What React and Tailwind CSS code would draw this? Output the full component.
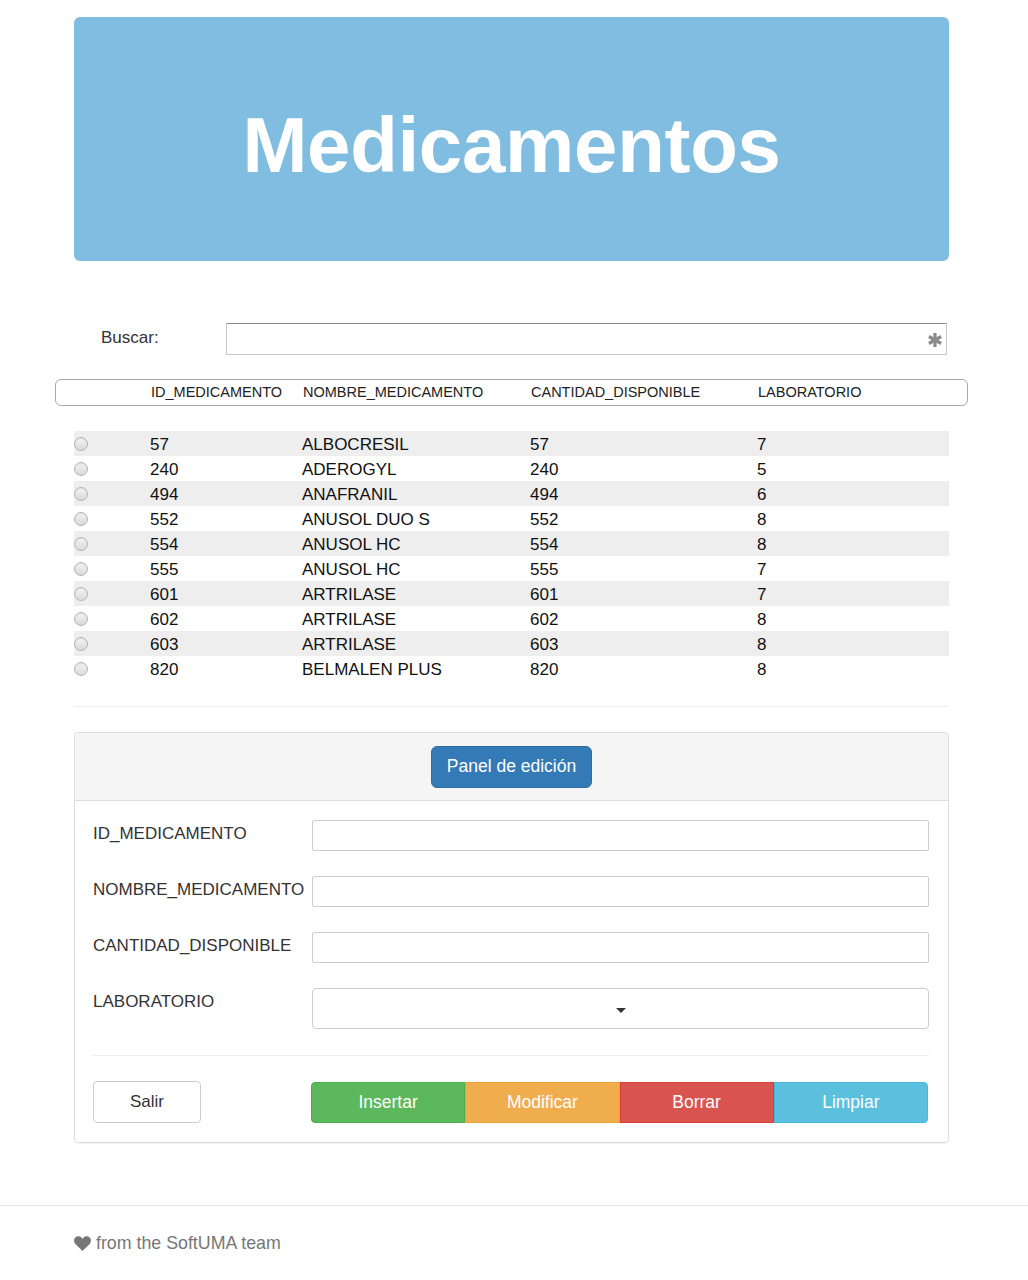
import { useState } from 'react';

const rows = [
  ['57', 'ALBOCRESIL', '57', '7'],
  ['240', 'ADEROGYL', '240', '5'],
  ['494', 'ANAFRANIL', '494', '6'],
  ['552', 'ANUSOL DUO S', '552', '8'],
  ['554', 'ANUSOL HC', '554', '8'],
  ['555', 'ANUSOL HC', '555', '7'],
  ['601', 'ARTRILASE', '601', '7'],
  ['602', 'ARTRILASE', '602', '8'],
  ['603', 'ARTRILASE', '603', '8'],
  ['820', 'BELMALEN PLUS', '820', '8'],
];

const fields = ['ID_MEDICAMENTO', 'NOMBRE_MEDICAMENTO', 'CANTIDAD_DISPONIBLE'];

function Radio() {
  return (
    <span className="block w-[14px] h-[14px] rounded-full border border-[#b5b5b5] bg-gradient-to-b from-[#f4f4f4] to-[#d9d9d9] shadow-[inset_0_1px_1px_rgba(0,0,0,0.08)]" />
  );
}

export default function App() {
  const [selected, setSelected] = useState(null);

  return (
    <div className="min-h-screen bg-white text-[#333] font-['Liberation_Sans',Arial,sans-serif] text-[17px]">
      <div className="w-[875px] ml-[74px] pt-[17px]">
        {/* jumbotron */}
        <div className="h-[244px] bg-[#80bde0] rounded-[6px] flex items-center justify-center">
          <h1 className="text-white font-bold text-[78px] leading-none tracking-[-0.3px] pt-[12px]">Medicamentos</h1>
        </div>

        {/* search */}
        <div className="mt-[62px] flex items-center">
          <label className="w-[152px] pl-[27px] -mt-[3px]">Buscar:</label>
          <div className="relative w-[721px] h-[32px] border border-[#c8c8c8] border-t-[#8e8e8e] flex items-center justify-end pr-[4px]">
            <svg width="14" height="14" viewBox="0 0 14 14" className="mt-[2px]">
              <g stroke="#8a8a8a" strokeWidth="3.2">
                <line x1="7" y1="0" x2="7" y2="14" />
                <line x1="0.9" y1="3.5" x2="13.1" y2="10.5" />
                <line x1="0.9" y1="10.5" x2="13.1" y2="3.5" />
              </g>
            </svg>
          </div>
        </div>

        {/* table header */}
        <div className="mt-[24px] -mx-[19px] h-[27px] border border-[#a8a8a8] rounded-[6px] pl-[19px] grid grid-cols-[76px_152px_228px_227px_1fr] items-center text-[14.5px] text-[#222]">
          <span />
          <span className="pt-[1px]">ID_MEDICAMENTO</span>
          <span className="pt-[1px]">NOMBRE_MEDICAMENTO</span>
          <span className="pt-[1px]">CANTIDAD_DISPONIBLE</span>
          <span className="pt-[1px]">LABORATORIO</span>
        </div>

        {/* rows */}
        <div className="mt-[25px]">
          {rows.map((r, i) => (
            <div
              key={r[0]}
              onClick={() => setSelected(r[0])}
              className={
                'h-[25px] grid grid-cols-[76px_152px_228px_227px_1fr] items-center text-[#111] ' +
                (i % 2 === 0 ? 'bg-[#eeeeee]' : 'bg-white')
              }
            >
              <Radio checked={selected === r[0]} />
              <span className="pt-[1px]">{r[0]}</span>
              <span className="pt-[1px]">{r[1]}</span>
              <span className="pt-[1px]">{r[2]}</span>
              <span className="pt-[1px]">{r[3]}</span>
            </div>
          ))}
        </div>

        <hr className="mt-[25px] border-0 border-t border-[#eeeeee]" />

        {/* edit panel */}
        <div className="mt-[25px] border border-[#dddddd] rounded-[4px] shadow-[0_1px_1px_rgba(0,0,0,0.05)]">
          <div className="h-[68px] bg-[#f5f5f5] border-b border-[#dddddd] rounded-t-[4px] flex items-center justify-center">
            <button className="h-[42px] px-[15px] bg-[#337ab7] border border-[#2e6da4] rounded-[6px] text-white text-[17.5px]">
              Panel de edición
            </button>
          </div>
          <div className="pt-[19px] px-[18px] pb-[19px] pr-[19px]">
            <div className="flex flex-col gap-[25px]">
              {fields.map((f) => (
                <div key={f} className="flex items-start">
                  <label className="w-[219px] shrink-0 pt-[2px] leading-[23px] whitespace-nowrap">{f}</label>
                  <input className="flex-1 h-[31px] border border-[#cccccc] rounded-[2px] outline-none" />
                </div>
              ))}
              <div className="flex items-start">
                <label className="w-[219px] shrink-0 pt-[2px] leading-[23px]">LABORATORIO</label>
                <div className="flex-1 h-[41px] border border-[#cccccc] rounded-[4px] flex items-center justify-center">
                  <span className="w-0 h-0 border-l-[5px] border-r-[5px] border-t-[5px] border-l-transparent border-r-transparent border-t-[#333] mt-[3px]" />
                </div>
              </div>
            </div>

            <hr className="mt-[26px] border-0 border-t border-[#eeeeee]" />

            <div className="mt-[25px] flex items-center pr-[1px]">
              <button className="w-[108px] h-[42px] border border-[#cccccc] rounded-[4px] bg-white text-[#333]">Salir</button>
              <div className="ml-[110px] flex flex-1 h-[41px] text-white text-[17.5px]">
                <button className="flex-1 bg-[#5cb85c] border border-[#4cae4c] rounded-l-[4px]">Insertar</button>
                <button className="flex-1 bg-[#f0ad4e] border border-[#eea236]">Modificar</button>
                <button className="flex-1 bg-[#d9534f] border border-[#d43f3a]">Borrar</button>
                <button className="flex-1 bg-[#5bc0de] border border-[#46b8da] rounded-r-[4px]">Limpiar</button>
              </div>
            </div>
          </div>
        </div>
      </div>

      {/* footer */}
      <footer className="mt-[62px] border-t border-[#e5e5e5]">
        <div className="w-[875px] ml-[74px] pt-[24px] pb-[20px] flex items-center gap-[5px] text-[#777] text-[17.8px]">
          <svg width="17" height="15" viewBox="0 0 24 21" fill="#777">
            <path d="M12 21 L2.2 11.4 C-0.6 8.6 -0.6 4.2 2.1 1.8 C4.6 -0.4 8.6 0 10.7 2.4 L12 3.9 L13.3 2.4 C15.4 0 19.4 -0.4 21.9 1.8 C24.6 4.2 24.6 8.6 21.8 11.4 Z" />
          </svg>
          <span>from the SoftUMA team</span>
        </div>
      </footer>
    </div>
  );
}
